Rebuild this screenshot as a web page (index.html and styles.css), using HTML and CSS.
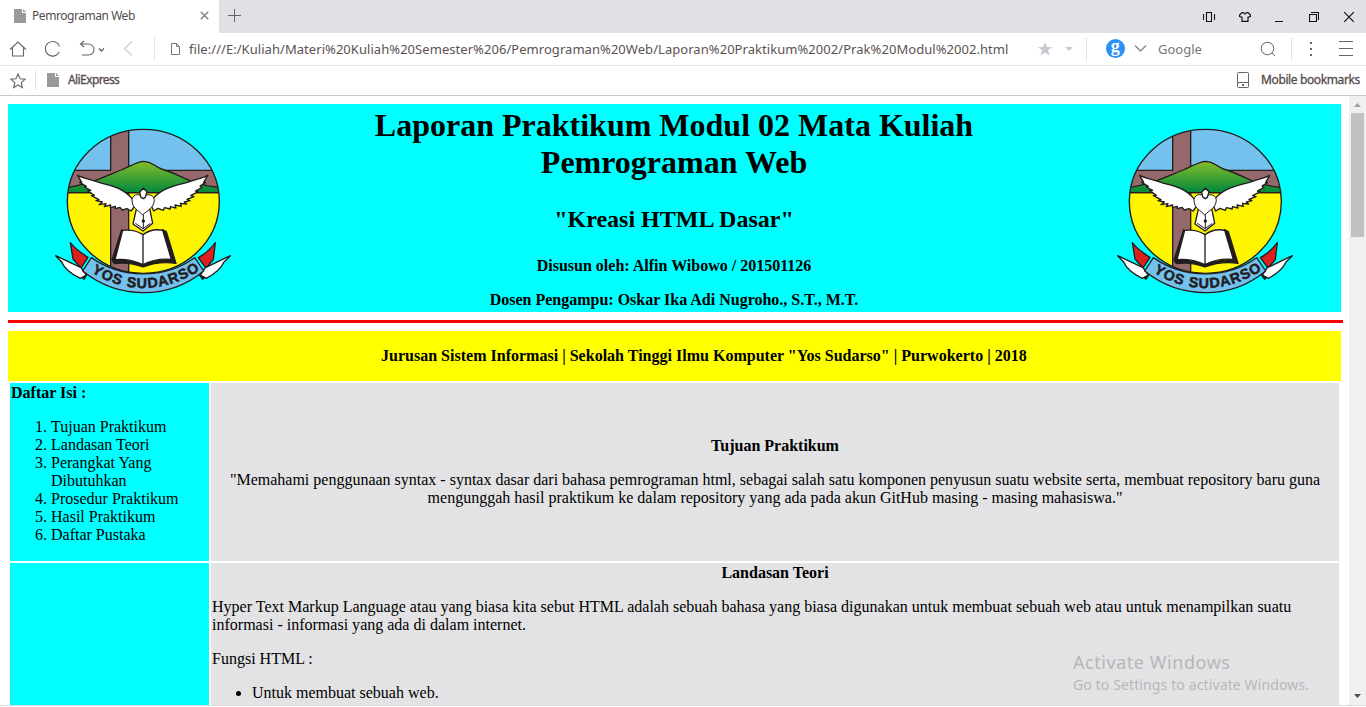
FILE: index.html
```html
<!DOCTYPE html>
<html lang="id">
<head>
<meta charset="utf-8">
<title>Pemrograman Web</title>
<link rel="stylesheet" href="styles.css">
</head>
<body>
<div class="browser">
  <div class="tabbar">
    <div class="tab">
      <svg class="file-icon" width="12" height="14" viewBox="0 0 12 14"><path d="M0 0h8v4h4v10H0z" fill="#999"/><path d="M9 0l3 3H9z" fill="#999"/></svg>
      <span class="tab-title">Pemrograman Web</span>
      <svg class="tab-close" width="9" height="9" viewBox="0 0 9 9"><path d="M.8.8l7.4 7.4M8.2.8L.8 8.2" stroke="#8c8585" stroke-width="1.6"/></svg>
    </div>
    <svg class="new-tab" width="13" height="13" viewBox="0 0 13 13"><path d="M6.5 0v13M0 6.5h13" stroke="#666" fill="none"/></svg>
    <div class="window-buttons">
      <svg width="13" height="10" viewBox="0 0 13 10" fill="none" stroke="#111"><path d="M.5 2v6M11.500 2v6M3.500 .5h5v9h-5z" stroke-width="1.1"/></svg>
      <svg width="12" height="10" viewBox="0 0 12 10" fill="none" stroke="#111" stroke-width="1.2"><path d="M3 .6L.6 3v1.500L3 5.300V9.400h6V5.300l2.400-.8V3L9 .6H7.800L6 2 4.200.6z"/></svg>
      <svg width="9" height="10" viewBox="0 0 9 10"><path d="M0 9.500h8" stroke="#111"/></svg>
      <svg width="10" height="10" viewBox="0 0 10 10" fill="none" stroke="#111"><path d="M.5 2.500h7v7h-7zM2 .5h7.500V8" stroke-width="1.100"/></svg>
      <svg width="10" height="10" viewBox="0 0 10 10"><path d="M0 0l10 10M10 0L0 10" stroke="#111" stroke-width="1.200"/></svg>
    </div>
  </div>

  <div class="toolbar">
    <svg class="nav-icons" width="160" height="32" viewBox="0 0 160 32" fill="none" stroke="#666" stroke-width="1.1">
      <path d="M10 16.500L18 9l8 7.500M12.500 14.500v8.500h11v-8.500"/>
      <path d="M59.500 13.200a7.300 7.300 0 1 0-.1 5.400"/>
      <path d="M84 8l-3.500 3L84 14M80.500 11h8a5.500 5.500 0 0 1 0 11H82"/>
      <path d="M99 15.500l2.500 2.500 2.500-2.500" stroke-width="1.300"/>
      <path d="M132 8.500l-7.500 7 7.500 7" stroke="#c9c9c9"/>
      <path d="M154.500 4v24" stroke="#e4e4e6"/>
    </svg>
    <svg class="page-icon" width="9" height="12" viewBox="0 0 9 12" fill="none" stroke="#777"><path d="M.5.5h5l3 3v8h-8zM5.500.5v3h3"/></svg>
    <span class="url">file:///E:/Kuliah/Materi%20Kuliah%20Semester%206/Pemrograman%20Web/Laporan%20Praktikum%2002/Prak%20Modul%2002.html</span>
    <svg class="search-icons" width="120" height="32" viewBox="0 0 120 32" fill="none">
      <path d="M15 9l2 5h5l-4 3.300 1.500 5.200-4.500-3-4.500 3L12 17.300 8 14h5z" fill="#c6c8d2"/>
      <path d="M35 14h8l-4 4z" fill="#c6c8d2"/>
      <path d="M56.500 4v24" stroke="#e4e4e6"/>
      <circle cx="85.500" cy="15.500" r="9.500" fill="#2b91f7"/>
      <text x="85.300" y="19" class="engine-letter">g</text>
      <path d="M105 12.500l5.500 5.500 5.500-5.500" stroke="#888" stroke-width="1.300"/>
    </svg>
    <span class="engine-name">Google</span>
    <svg class="menu-icons" width="106" height="32" viewBox="0 0 106 32" fill="none" stroke="#666">
      <circle cx="7.500" cy="15.500" r="6.300"/><path d="M12 20l3 3"/>
      <path d="M31.500 4v24" stroke="#e4e4e6"/>
      <path d="M50 9h2v2h-2zM50 15h2v2h-2zM50 21h2v2h-2z" fill="#666" stroke="none"/>
      <path d="M79 8.500h14M79 15.500h14M79 22.500h14"/>
    </svg>
  </div>

  <div class="bookmarks">
    <svg width="60" height="29" viewBox="0 0 60 29" fill="none" stroke="#666" stroke-width="1.100">
      <path d="M18 8l2.100 4.700 5 .5-3.800 3.400 1.100 5-4.400-2.600-4.400 2.600 1.100-5-3.800-3.400 5-.5z"/>
      <path d="M35.500 4v20" stroke="#e4e4e6"/>
      <path d="M47 7h8v4h4v10H47zM56 7l3 3h-3z" fill="#999" stroke="none"/>
    </svg>
    <span class="bookmark-label">AliExpress</span>
    <svg class="mobile-icon" width="12" height="16" viewBox="0 0 12 16" fill="none" stroke="#666"><rect x=".5" y=".5" width="11" height="15" rx="1"/><path d="M1 10.500h10"/><path d="M5 12h2v2H5z" fill="#666" stroke="none"/></svg>
    <span class="mobile-label">Mobile bookmarks</span>
  </div>

  <div class="viewport">
    <div class="page">
      <header class="report-head">
        <svg class="emblem" width="205" height="190" viewBox="0 0 615 570">
          <defs>
            <linearGradient id="hill" x1="0" y1="0" x2="0" y2="1"><stop offset="0" stop-color="#86bd2a"/><stop offset=".95" stop-color="#078b3c"/></linearGradient>
            <clipPath id="disc"><ellipse cx="310" cy="259" rx="228" ry="216"/></clipPath>
            <path id="motto" d="M151 470Q310 571 482 465"/>
            <g id="logo" stroke="#211d1e" stroke-width="4" stroke-linejoin="round">
              <g clip-path="url(#disc)">
                <path d="M70 30h480v203H70z" fill="#74c1ee" stroke="none"/>
                <path d="M70 232h480v260H70z" fill="#fff500"/>
                <path d="M212 30v136H70v67h142v260h54V233h290v-67H266V30z" fill="#95696b"/>
                <path d="M70 219C145 211 203 181 244 165C279 149 294 139 311 139C338 140 340 153 365 162C410 176 432 192 463 202C500 214 515 216 550 219V233H70z" fill="url(#hill)"/>
              </g>
              <ellipse cx="310" cy="259" rx="228" ry="216" fill="none"/>
              <path d="M276 251C247 218 217 213 179 203C151 193 132 190 113 181L125 202L119 202L139 214L133 216L152 226L143 227L163 241L154 242L177 254L168 257L187 261L177 269L198 266L193 275L212 270L211 278L226 274L226 281L240 277L247 285L261 281L273 288L287 270zM339 251C368 218 408 211 440 203C467 193 485 190 503 181L491 202L497 202L480 213L486 217L466 228L475 230L452 242L462 245L441 253L450 257L433 261L440 267L421 265L424 274L405 270L408 279L391 275L391 282L373 278L370 286L354 280L341 288L332 268z" fill="#fff"/>
              <path d="M289 283L279 327L309 348L338 325L329 280z" fill="#fff"/>
              <path d="M310 250C304 235 279 234 276 254C275 280 297 286 308 300C320 287 343 279 343 254C339 235 315 235 310 250z" fill="#fff" stroke-width="3"/>
              <path d="M299 232L310 219L321 230L316 247L310 251L303 247z" fill="#fff"/>
              <path d="M310 298v44M286 325l23 16 22-16" fill="none" stroke-width="3"/>
              <circle cx="310" cy="318" r="3" fill="#211d1e"/>
              <path d="M245 344L216 435L223 446C258 441 281 445 309 456C337 445 369 439 408 445L379 350L367 344L394 434C365 435 337 437 309 449C281 436 253 437 225 436z" fill="#211d1e"/>
              <path d="M248 346Q284 342 309 359Q336 339 368 346L394 433Q345 429 309 449Q267 430 225 434z" fill="#fff"/>
              <path d="M309 359v90" fill="none"/>
              <path d="M119 481L132 493L139 481L128 463zM501 481L488 493L479 481L493 463z" fill="#211d1e"/>
              <path d="M91 383C107 404 123 414 144 427L123 459L99 432zM526 383C511 404 497 416 475 428L498 459L520 434z" fill="#dc201e"/>
              <path d="M47 422L123 458L139 480L121 490C95 478 73 460 65 441zM571 422L496 458L481 480L499 490C524 477 543 460 552 441z" fill="#fff"/>
              <path d="M154 428C245 492 374 493 464 428L491 468C384 556 234 553 128 468z" fill="#74c1ee"/>
            </g>
          </defs>
          <use href="#logo"/>
          <text class="motto"><textPath href="#motto" textLength="346" startOffset="3">YOS SUDARSO</textPath></text>
        </svg>
        <div class="titles">
          <h1>Laporan Praktikum Modul 02 Mata Kuliah<br>Pemrograman Web</h1>
          <h2>"Kreasi HTML Dasar"</h2>
          <h4>Disusun oleh: Alfin Wibowo / 201501126</h4>
          <h4>Dosen Pengampu: Oskar Ika Adi Nugroho., S.T., M.T.</h4>
        </div>
        <svg class="emblem" width="205" height="190" viewBox="0 0 615 570">
          <use href="#logo"/>
          <text class="motto"><textPath href="#motto" textLength="346" startOffset="3">YOS SUDARSO</textPath></text>
        </svg>
      </header>
      <div class="rule"></div>
      <div class="banner">Jurusan Sistem Informasi | Sekolah Tinggi Ilmu Komputer "Yos Sudarso" | Purwokerto | 2018</div>
      <main class="content">
        <nav class="cell toc">
          <b>Daftar Isi :</b>
          <ol>
            <li>Tujuan Praktikum</li><li>Landasan Teori</li><li>Perangkat Yang<br>Dibutuhkan</li><li>Prosedur Praktikum</li><li>Hasil Praktikum</li><li>Daftar Pustaka</li>
          </ol>
        </nav>
        <section class="cell goal">
          <h4>Tujuan Praktikum</h4>
          <p>"Memahami penggunaan syntax - syntax dasar dari bahasa pemrograman html, sebagai salah satu komponen penyusun suatu website serta, membuat repository baru guna<br>mengunggah hasil praktikum ke dalam repository yang ada pada akun GitHub masing - masing mahasiswa."</p>
        </section>
        <div class="cell side"></div>
        <section class="cell theory">
          <h4>Landasan Teori</h4>
          <p class="intro">Hyper Text Markup Language atau yang biasa kita sebut HTML adalah sebuah bahasa yang biasa digunakan untuk membuat sebuah web atau untuk menampilkan suatu<br>informasi - informasi yang ada di dalam internet.</p>
          <p>Fungsi HTML :</p>
          <ul><li>Untuk membuat sebuah web.</li></ul>
        </section>
      </main>
    </div>
    <div class="scrollbar">
      <svg width="17" height="17" viewBox="0 0 17 17"><path d="M5 11h7L8.500 7z" fill="#a3a3a3"/></svg>
      <div class="thumb"></div>
      <svg class="down" width="17" height="17" viewBox="0 0 17 17"><path d="M5 6h7l-3.500 4z" fill="#505050"/></svg>
    </div>
  </div>
  <div class="watermark"><div class="wm-title">Activate Windows</div><div class="wm-text">Go to Settings to activate Windows.</div></div>
</div>
</body>
</html>
```
FILE: styles.css
```css
* { box-sizing: border-box; }
body { margin: 0; overflow: hidden; background: #fff; }
svg { display: block; flex: none; }
.browser { position: relative; width: 1366px; height: 707px; display: flex; flex-direction: column; font-family: "Noto Sans", sans-serif; white-space: nowrap; }

.tabbar { height: 33px; flex: none; display: flex; background: #e0e1e6; }
.tab { width: 219px; display: flex; align-items: center; background: #fff; padding: 0 10px 2px 14px; }
.tab-title { margin-left: 6px; font-size: 12px; line-height: 20px; color: #554b4b; letter-spacing: -0.45px; }
.tab-close { margin-left: auto; }
.new-tab { margin: 9px 0 0 9px; }
.window-buttons { margin: 12px 12px 0 auto; display: flex; gap: 25px; }
.window-buttons svg:first-child { margin-right: -2px; }
.window-buttons svg:nth-child(2) { margin-right: -1px; }

.toolbar { height: 33px; flex: none; display: flex; border-bottom: 1px solid #e4e4e6; color: #5c5252; }
.page-icon { margin: 10px 0 0 11px; }
.url { width: 832px; margin-left: 9px; font-size: 13px; line-height: 32px; letter-spacing: 0.05px; }
.search-icons { margin-left: 9px; }
.engine-letter { font: bold 18px "Liberation Serif", serif; fill: #fff; text-anchor: middle; }
.engine-name { width: 102px; margin-left: 8px; font-size: 13px; line-height: 32px; color: #777; }

.bookmarks { height: 30px; flex: none; display: flex; border-bottom: 1px solid #c8c8c8; font-size: 12px; line-height: 28px; color: #554b4b; }
.bookmark-label { margin-left: 8px; letter-spacing: -0.6px; -webkit-text-stroke: .3px #554b4b; }
.mobile-icon { margin: 6px 12px 0 auto; }
.mobile-label { width: 105px; letter-spacing: -0.38px; -webkit-text-stroke: .3px #554b4b; }

.viewport { flex: none; height: 610px; display: flex; border-bottom: 1px solid #dcdcdc; overflow: hidden; }
.page { width: 1349px; padding: 8px; font: 16px/18px "Liberation Serif", serif; color: #000; }
.report-head { width: 1333px; height: 208px; display: flex; background: #0ff; padding: 11px 34px 0 32px; }
.titles { flex: 1; margin-top: -8px; padding-left: 1px; text-align: center; }
h1, h2, h4 { margin: 0; }
h1 { font-size: 32px; line-height: 37px; }
h2 { margin-top: 24px; font-size: 24px; line-height: 28px; }
.titles h4 { margin-top: 16px; }
.titles h2 + h4 { margin-top: 24px; }
.motto { font: bold 43px "Liberation Sans", sans-serif; fill: #211d1e; stroke: #211d1e; stroke-width: 1.5px; }
.rule { width: 1335px; height: 3px; margin: 8px 0; background: #f00; }
.banner { width: 1333px; height: 50px; background: #ff0; padding: 16px 0 0 373px; font-weight: bold; letter-spacing: 0.01px; }
.content { margin: 2px; width: 1329px; display: grid; grid-template-columns: 199px 1128px; grid-template-rows: 178px 160px; gap: 2px; }
.cell { padding: 1px; background: #e3e3e5; }
.toc, .side { background: #0ff; }
.cell ol, .cell ul { margin: 16px 0; padding-left: 40px; }
.cell h4 { text-align: center; }
.cell p { margin: 16px 0 0; }
.intro { letter-spacing: 0.007px; }
.goal { padding-top: 54px; text-align: center; }

.scrollbar { width: 17px; background: #f0f0f0; display: flex; flex-direction: column; }
.thumb { width: 13px; height: 124px; margin-left: 2px; background: #c1c1c1; }
.down { margin-top: auto; }
.watermark { position: absolute; left: 1073px; top: 650px; color: #b7b7b9; }
.wm-title { font-size: 18px; line-height: 24px; letter-spacing: 0.55px; }
.wm-text { font-size: 14px; line-height: 21px; letter-spacing: 0.12px; }
```
